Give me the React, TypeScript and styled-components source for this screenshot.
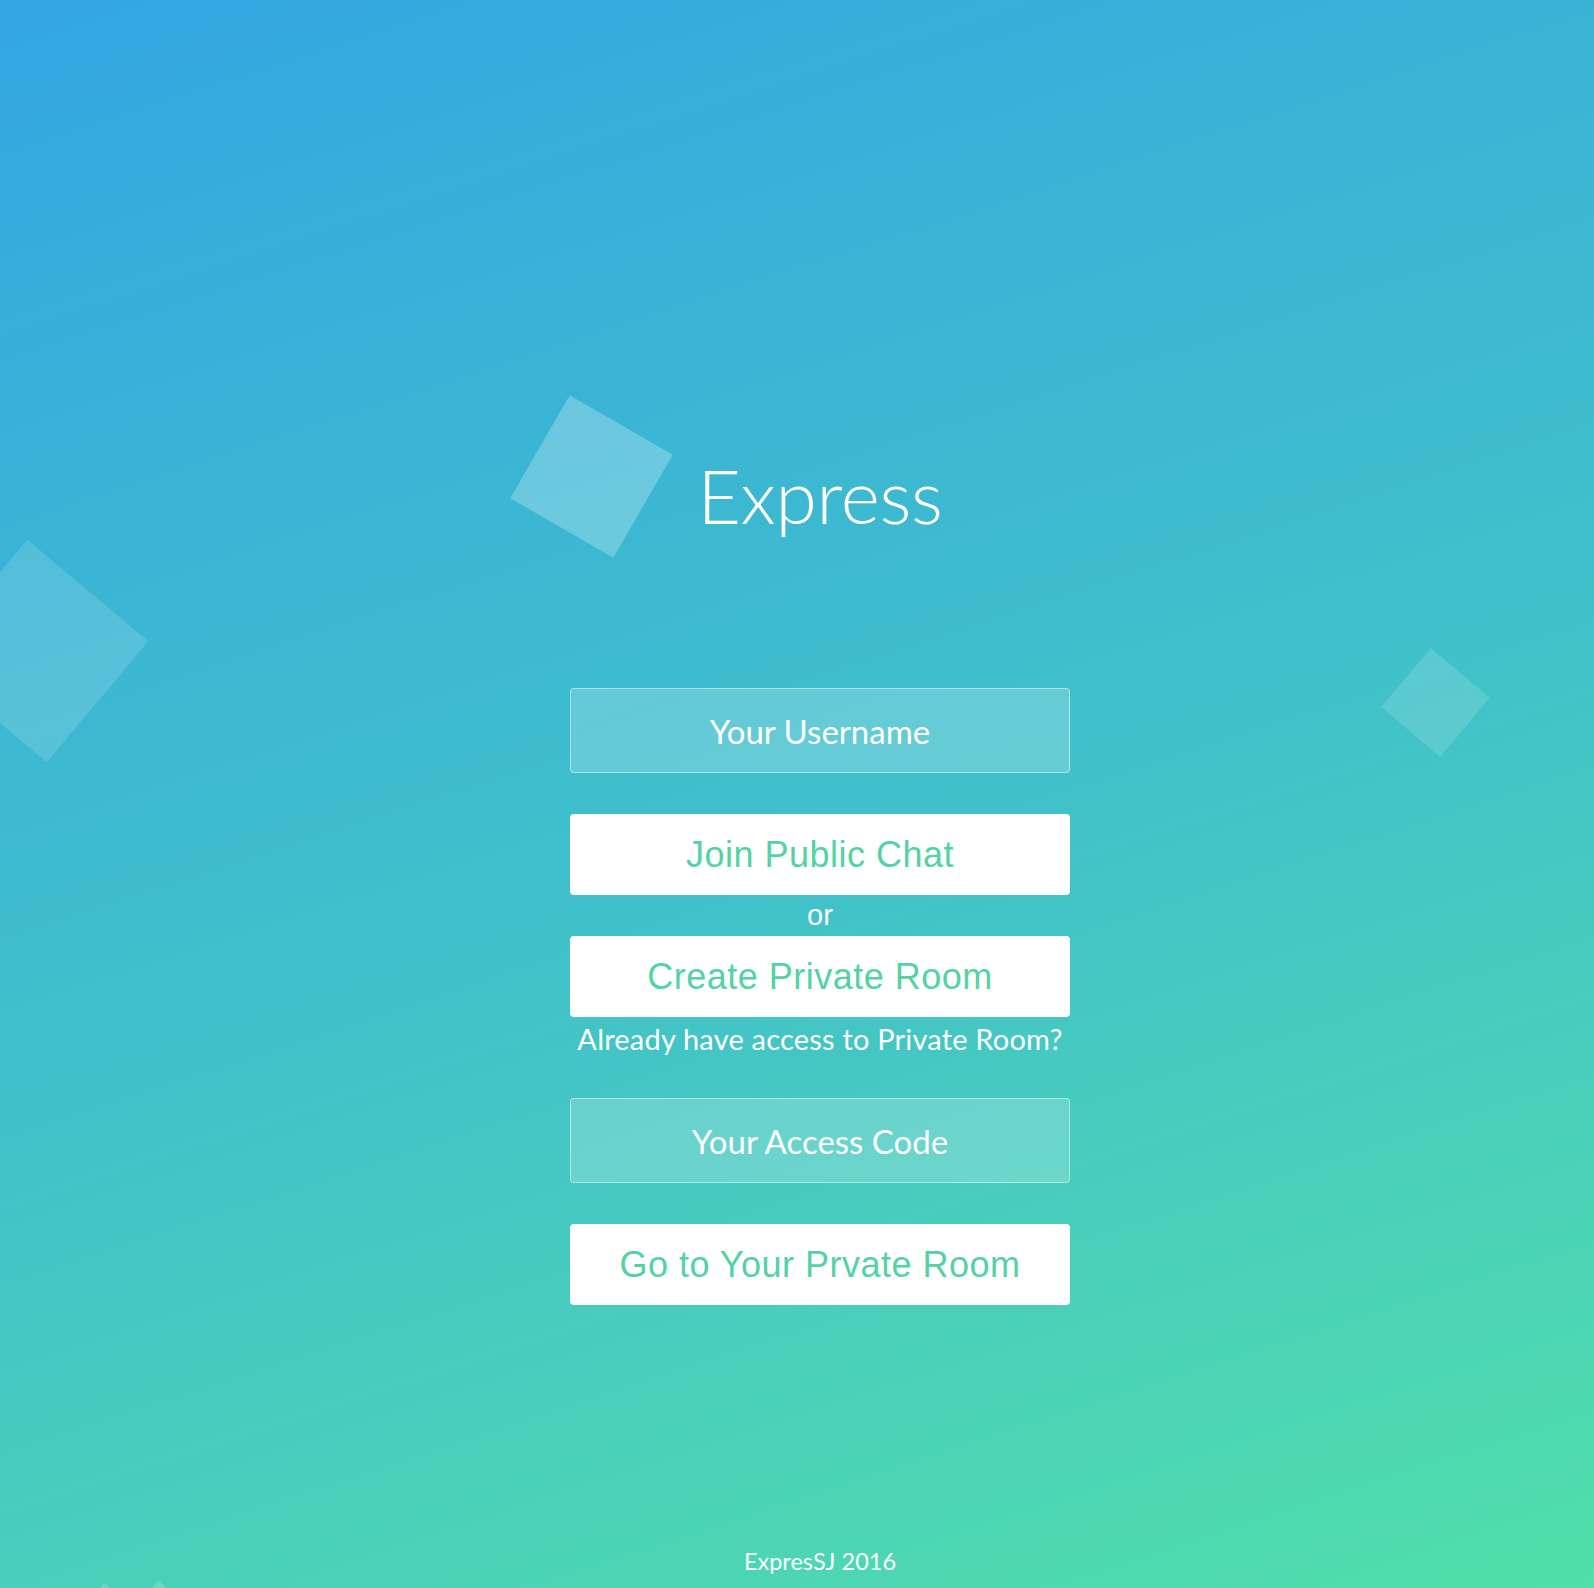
import React from "react";
import styled, { createGlobalStyle } from "styled-components";

const Global = createGlobalStyle`
  html, body { margin: 0; padding: 0; }
  body { overflow: hidden; }
  * { box-sizing: border-box; }
`;

const Page = styled.div`
  position: relative;
  width: 100%;
  height: 1588px;
  overflow: hidden;
  padding-left: 46px;
  background: linear-gradient(162deg, #33a6e2 0%, #41c2c9 55%, #52deaa 100%);
  display: flex;
  flex-direction: column;
  align-items: center;
  font-family: Lato, "Open Sans", sans-serif;
  color: #ffffff;
`;

const Bubble = styled.div<{ $size: number; $x: number; $y: number; $rot: number; $alpha: number }>`
  position: absolute;
  left: ${(p) => p.$x - p.$size / 2}px;
  top: ${(p) => p.$y - p.$size / 2}px;
  width: ${(p) => p.$size}px;
  height: ${(p) => p.$size}px;
  background: rgba(255, 255, 255, ${(p) => p.$alpha});
  transform: rotate(${(p) => p.$rot}deg);
  z-index: 0;
`;

const Title = styled.h1`
  position: relative;
  z-index: 1;
  margin: 445px 0 0;
  font-family: Lato, "Open Sans", sans-serif;
  font-weight: 300;
  font-size: 75px;
  line-height: 100px;
  letter-spacing: -0.3px;
`;

const Form = styled.form`
  position: relative;
  z-index: 1;
  width: 500px;
  margin-top: 143px;
  display: flex;
  flex-direction: column;
  align-items: stretch;
`;

const Field = styled.input`
  display: block;
  width: 100%;
  height: 85px;
  margin: 0 0 41px;
  border: 1px solid rgba(255, 255, 255, 0.45);
  border-radius: 4px;
  background: rgba(255, 255, 255, 0.2);
  color: #fff;
  text-align: center;
  font-family: Lato, "Open Sans", sans-serif;
  font-size: 33px;
  font-weight: 400;
  outline: none;
  &::placeholder { color: #fff; opacity: 1; }
`;

const Button = styled.button`
  display: block;
  width: 100%;
  height: 81px;
  border: 0;
  border-radius: 4px;
  background: #ffffff;
  color: #53d3a4;
  font-family: "Liberation Sans", Arial, sans-serif;
  font-size: 36px;
  letter-spacing: 0.5px;
  cursor: pointer;
`;

const Or = styled.div`
  height: 41px;
  line-height: 41px;
  text-align: center;
  font-family: "Liberation Sans", Arial, sans-serif;
  font-size: 29px;
`;

const Hint = styled.div`
  height: 81px;
  padding-top: 2px;
  line-height: 40px;
  text-align: center;
  font-family: Lato, "Open Sans", sans-serif;
  font-size: 29px;
  letter-spacing: 0.2px;
  white-space: nowrap;
`;

const Footer = styled.footer`
  position: relative;
  z-index: 1;
  margin-top: auto;
  margin-bottom: 12px;
  line-height: 30px;
  font-family: Lato, "Open Sans", sans-serif;
  font-size: 23.5px;
`;

export default function App() {
  return (
    <>
      <Global />
      <Page>
        <Bubble $size={119} $x={591} $y={476} $rot={30} $alpha={0.25} />
        <Bubble $size={158} $x={37} $y={651} $rot={40} $alpha={0.14} />
        <Bubble $size={77} $x={1435} $y={702} $rot={40} $alpha={0.14} />
        <Bubble $size={60} $x={108} $y={1625} $rot={40} $alpha={0.18} />
        <Bubble $size={60} $x={162} $y={1623} $rot={40} $alpha={0.18} />
        <Title>Express</Title>
        <Form onSubmit={(e) => e.preventDefault()}>
          <Field type="text" placeholder="Your Username" />
          <Button type="button">Join Public Chat</Button>
          <Or>or</Or>
          <Button type="button">Create Private Room</Button>
          <Hint>Already have access to Private Room?</Hint>
          <Field type="text" placeholder="Your Access Code" />
          <Button type="button">Go to Your Prvate Room</Button>
        </Form>
        <Footer>ExpresSJ 2016</Footer>
      </Page>
    </>
  );
}
